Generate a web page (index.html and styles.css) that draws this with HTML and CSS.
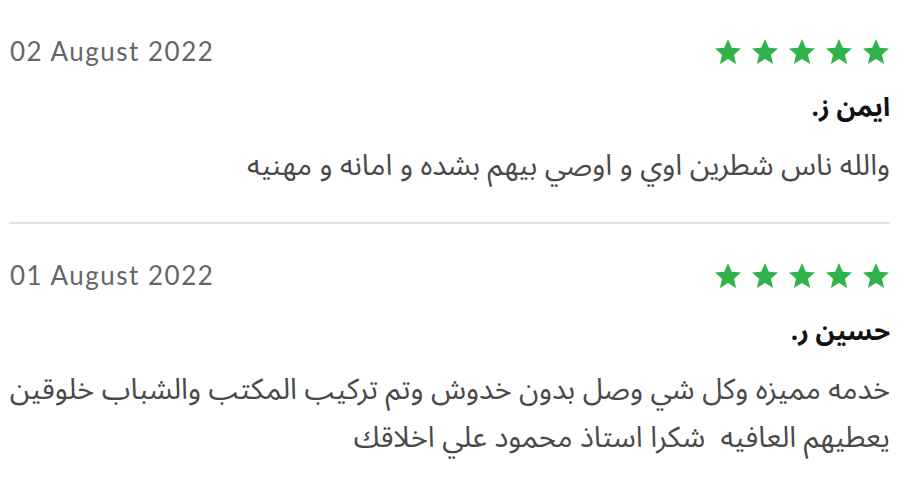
FILE: index.html
```html
<!DOCTYPE html>
<html lang="ar">
<head>
    <meta charset="UTF-8">
    <meta name="viewport" content="width=device-width, initial-scale=1.0">
    <title>Reviews</title>
    <link rel="stylesheet" href="styles.css">
</head>
<body>
    <div class="reviews">
        <div class="review">
            <div class="review-head">
                <span class="review-date">02 August 2022</span>
                <span class="stars">
                    <svg class="star" viewBox="1.3 1.5 21.4 20.4"><path d="M12 1.5l3.1 7.2 7.6.6-5.8 5 1.8 7.6L12 17.9l-6.7 4 1.8-7.6-5.8-5 7.6-.6z"/></svg>
                    <svg class="star" viewBox="1.3 1.5 21.4 20.4"><path d="M12 1.5l3.1 7.2 7.6.6-5.8 5 1.8 7.6L12 17.9l-6.7 4 1.8-7.6-5.8-5 7.6-.6z"/></svg>
                    <svg class="star" viewBox="1.3 1.5 21.4 20.4"><path d="M12 1.5l3.1 7.2 7.6.6-5.8 5 1.8 7.6L12 17.9l-6.7 4 1.8-7.6-5.8-5 7.6-.6z"/></svg>
                    <svg class="star" viewBox="1.3 1.5 21.4 20.4"><path d="M12 1.5l3.1 7.2 7.6.6-5.8 5 1.8 7.6L12 17.9l-6.7 4 1.8-7.6-5.8-5 7.6-.6z"/></svg>
                    <svg class="star" viewBox="1.3 1.5 21.4 20.4"><path d="M12 1.5l3.1 7.2 7.6.6-5.8 5 1.8 7.6L12 17.9l-6.7 4 1.8-7.6-5.8-5 7.6-.6z"/></svg>
                </span>
            </div>
            <div class="review-name" dir="rtl">ايمن ز.</div>
            <p class="review-text" dir="rtl">والله ناس شطرين اوي و اوصي بيهم بشده و امانه و مهنيه</p>
        </div>

        <div class="review">
            <div class="review-head">
                <span class="review-date">01 August 2022</span>
                <span class="stars">
                    <svg class="star" viewBox="1.3 1.5 21.4 20.4"><path d="M12 1.5l3.1 7.2 7.6.6-5.8 5 1.8 7.6L12 17.9l-6.7 4 1.8-7.6-5.8-5 7.6-.6z"/></svg>
                    <svg class="star" viewBox="1.3 1.5 21.4 20.4"><path d="M12 1.5l3.1 7.2 7.6.6-5.8 5 1.8 7.6L12 17.9l-6.7 4 1.8-7.6-5.8-5 7.6-.6z"/></svg>
                    <svg class="star" viewBox="1.3 1.5 21.4 20.4"><path d="M12 1.5l3.1 7.2 7.6.6-5.8 5 1.8 7.6L12 17.9l-6.7 4 1.8-7.6-5.8-5 7.6-.6z"/></svg>
                    <svg class="star" viewBox="1.3 1.5 21.4 20.4"><path d="M12 1.5l3.1 7.2 7.6.6-5.8 5 1.8 7.6L12 17.9l-6.7 4 1.8-7.6-5.8-5 7.6-.6z"/></svg>
                    <svg class="star" viewBox="1.3 1.5 21.4 20.4"><path d="M12 1.5l3.1 7.2 7.6.6-5.8 5 1.8 7.6L12 17.9l-6.7 4 1.8-7.6-5.8-5 7.6-.6z"/></svg>
                </span>
            </div>
            <div class="review-name" dir="rtl">حسين ر.</div>
            <p class="review-text" dir="rtl">خدمه مميزه وكل شي وصل بدون خدوش وتم تركيب المكتب والشباب خلوقين يعطيهم العافيه&nbsp; شكرا استاذ محمود علي اخلاقك</p>
        </div>
    </div>
</body>
</html>
```

FILE: styles.css
```css
body {
    margin: 0;
    background: #fff;
    font-family: "Noto Sans Arabic", "DejaVu Sans", "Noto Sans", sans-serif;
}
.reviews {
    padding: 0 32px 0 9px;
}
.review {
    padding: 29px 0 32px;
    border-bottom: 2px solid #e3e3e3;
}
.review:last-child {
    border-bottom: none;
}
.review-head {
    display: flex;
    justify-content: space-between;
    align-items: center;
    height: 44px;
}
.review-date {
    font-family: Lato, "Open Sans", sans-serif;
    font-size: 26px;
    letter-spacing: 1.5px;
    color: #666;
    padding-left: 1px;
}
.stars {
    display: flex;
    gap: 11px;
    margin-right: 1px;
}
.star {
    width: 26px;
    height: 25px;
    fill: #30b34a;
}
.review-name {
    margin-top: 15px;
    line-height: 40px;
    font-size: 26px;
    font-weight: bold;
    color: #111;
}
.review-text {
    margin: 14px 0 0;
    line-height: 48px;
    font-size: 29px;
    letter-spacing: 0.2px;
    color: #4a4a4a;
}
```
